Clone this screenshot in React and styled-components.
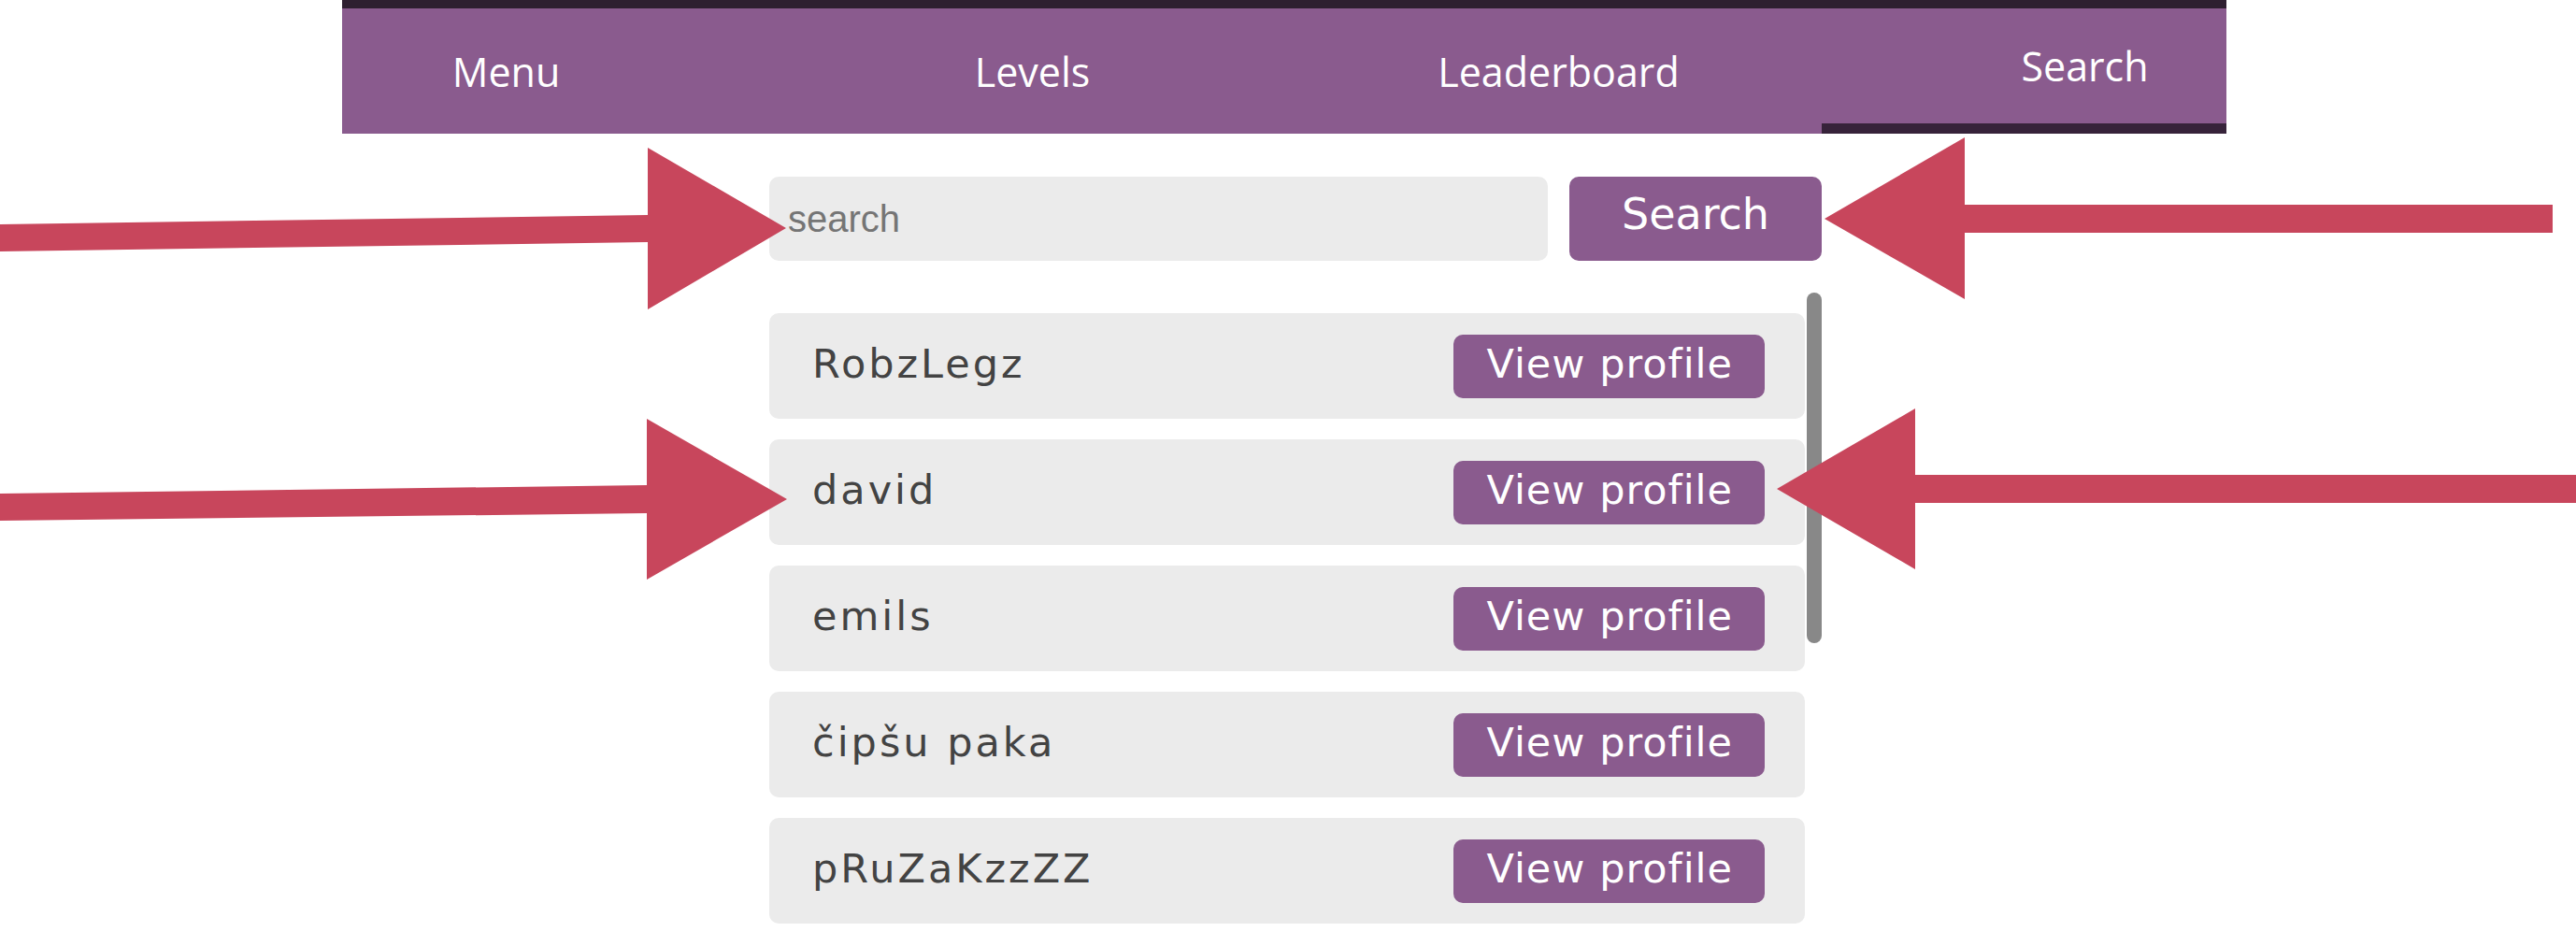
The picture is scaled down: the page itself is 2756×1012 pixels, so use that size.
import styled, { createGlobalStyle } from 'styled-components';

const GlobalStyle = createGlobalStyle`
  html, body {
    margin: 0;
    padding: 0;
    background: #ffffff;
    overflow: hidden;
  }
`;

const purple = '#8a5b8e';
const dark = '#2e1f30';

const Canvas = styled.div`
  position: relative;
  width: 2756px;
  height: 1012px;
  background: #ffffff;
  overflow: hidden;
`;

/* the pasted screenshot, cropped on both sides */
const Shot = styled.div`
  margin-left: 366px;
  width: 2016px;
  height: 100%;
  overflow: hidden;
`;

const Page = styled.div`
  width: 2252px;
  margin-left: -106px;
`;

const Nav = styled.nav`
  display: grid;
  grid-template-columns: repeat(4, 1fr);
  height: 143px;
  box-sizing: border-box;
  border-top: 9px solid ${dark};
  background: ${purple};
`;

const Tab = styled.div`
  display: flex;
  align-items: center;
  justify-content: center;
  box-sizing: border-box;
  font-family: "Open Sans", sans-serif;
  font-size: 43px;
  color: #ffffff;
  border-bottom: ${(p) => (p.$active ? `11px solid #37233a` : 'none')};
`;

const Main = styled.main`
  width: 1126px;
  margin: 46px auto 0;
`;

const SearchForm = styled.form`
  display: flex;
  gap: 23px;
  height: 90px;
`;

const SearchInput = styled.input`
  flex: 1;
  border: none;
  border-radius: 10px;
  background: #ebebeb;
  padding: 0 20px;
  font-family: "Liberation Sans", Arial, sans-serif;
  font-size: 40px;
  color: #333;
  outline: none;

  &::placeholder {
    color: #757575;
  }
`;

const SearchButton = styled.button`
  width: 270px;
  border: none;
  border-radius: 10px;
  background: ${purple};
  color: #ffffff;
  font-family: "DejaVu Sans", sans-serif;
  font-size: 46px;
  padding: 0 0 10px;
`;

const ListWrap = styled.div`
  margin-top: 34px;
  height: 690px;
  display: flex;
`;

const List = styled.div`
  flex: 1;
  overflow: hidden;
  padding: 22px 2px 0 0;
  display: flex;
  flex-direction: column;
  gap: 22px;
`;

const Track = styled.div`
  width: 16px;
`;

const Thumb = styled.div`
  height: 375px;
  border-radius: 8px;
  background: #888888;
`;

const Row = styled.div`
  flex: 0 0 113px;
  display: flex;
  align-items: center;
  justify-content: space-between;
  padding: 0 43px 0 46px;
  border-radius: 10px;
  background: #ebebeb;
`;

const Name = styled.span`
  padding-bottom: 6px;
  font-family: "DejaVu Sans", sans-serif;
  font-size: 43px;
  letter-spacing: 3px;
  color: #434343;
`;

const ViewButton = styled.button`
  height: 68px;
  padding: 0 34px 6px 35px;
  border: none;
  border-radius: 10px;
  background: ${purple};
  color: #ffffff;
  font-family: "DejaVu Sans", sans-serif;
  font-size: 43px;
  letter-spacing: 1px;
`;

const Overlay = styled.svg`
  position: absolute;
  top: 0;
  left: 0;
  pointer-events: none;
`;

const tabs = ['Menu', 'Levels', 'Leaderboard', 'Search'];

const users = ['RobzLegz', 'david', 'emils', 'čipšu paka', 'pRuZaKzzZZ'];

const arrows = [
  '0,240 693,230 693,158 841,244 693,331 693,259 0,269',
  '0,528 692,519 692,448 842,534 692,620 692,549 0,557',
  '2731,219 2102,219 2102,147 1952,234 2102,320 2102,249 2731,249',
  '2756,508 2049,508 2049,437 1901,523 2049,609 2049,538 2756,538',
];

export default function App() {
  return (
    <>
      <GlobalStyle />
      <Canvas>
        <Shot>
          <Page>
            <Nav>
              {tabs.map((t) => (
                <Tab key={t} $active={t === 'Search'}>{t}</Tab>
              ))}
            </Nav>
            <Main>
              <SearchForm onSubmit={(e) => e.preventDefault()}>
                <SearchInput placeholder="search" />
                <SearchButton type="submit">Search</SearchButton>
              </SearchForm>
              <ListWrap>
                <List>
                  {users.map((u) => (
                    <Row key={u}>
                      <Name>{u}</Name>
                      <ViewButton>View profile</ViewButton>
                    </Row>
                  ))}
                </List>
                <Track>
                  <Thumb />
                </Track>
              </ListWrap>
            </Main>
          </Page>
        </Shot>
        <Overlay width="2756" height="1012" viewBox="0 0 2756 1012">
          {arrows.map((pts, i) => (
            <polygon key={i} points={pts} fill="#c8465c" />
          ))}
        </Overlay>
      </Canvas>
    </>
  );
}
